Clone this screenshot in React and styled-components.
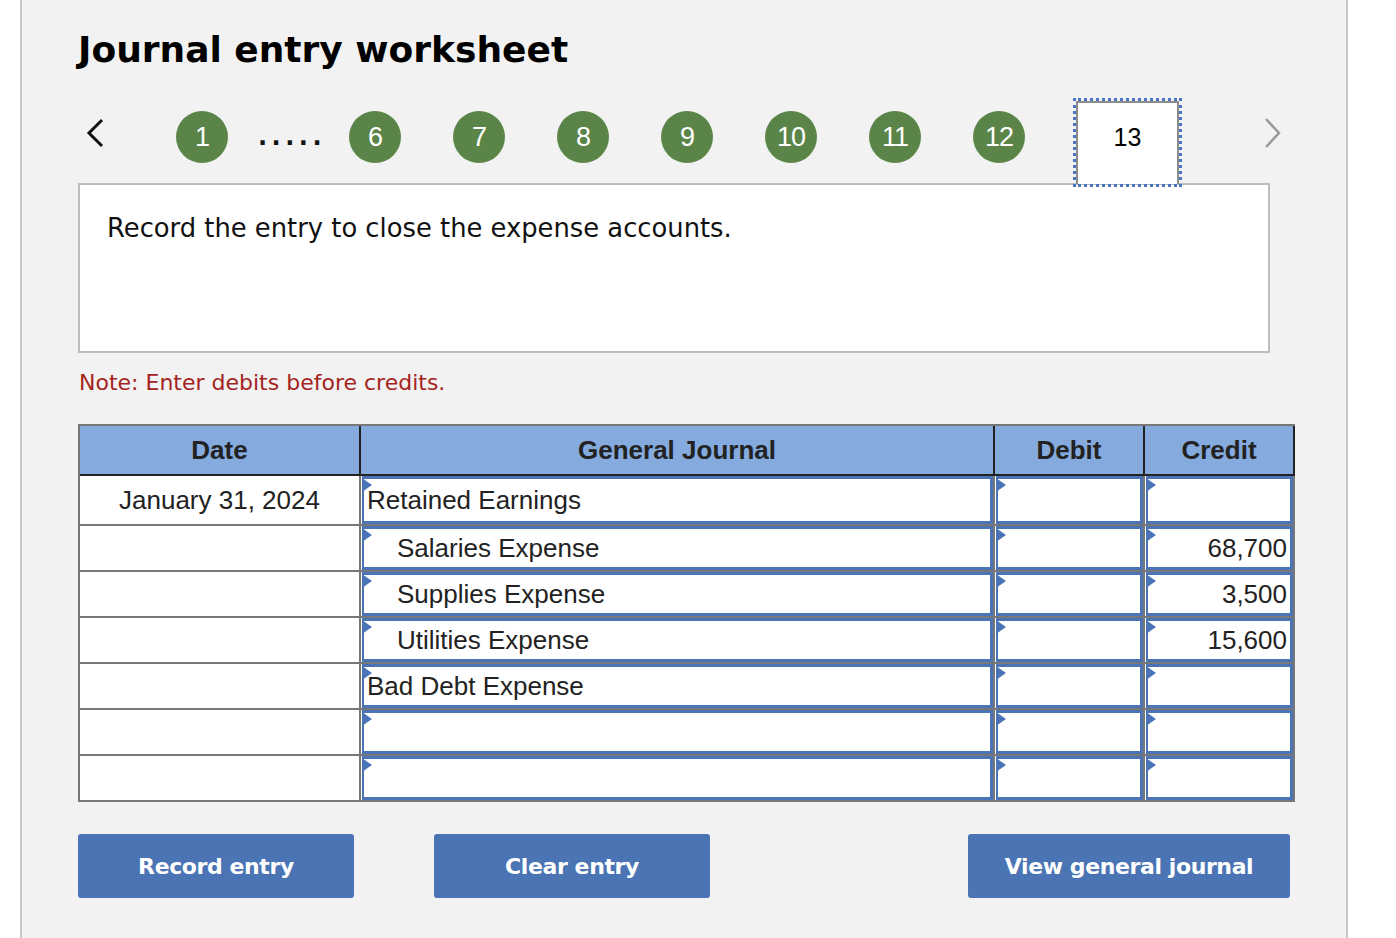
import React from "react";
import styled, { createGlobalStyle } from "styled-components";

const GlobalStyle = createGlobalStyle`
  html, body {
    margin: 0;
    padding: 0;
    background: #ffffff;
  }
  body {
    font-family: "DejaVu Sans", "Liberation Sans", sans-serif;
  }
`;

const Panel = styled.div`
  margin-left: 20px;
  width: 1328px;
  min-height: 938px;
  box-sizing: border-box;
  border-left: 2px solid #c8c8c8;
  border-right: 2px solid #c8c8c8;
  background: #f2f2f2;
  padding: 27px 0 0 56px;
`;

const Title = styled.h1`
  margin: 0;
  font-family: "DejaVu Sans", sans-serif;
  font-weight: 700;
  font-size: 36px;
  line-height: 46px;
  color: #000;
`;

const Nav = styled.div`
  display: flex;
  align-items: flex-start;
  height: 85px;
  margin-top: 25px;
`;

const Arrow = styled.svg`
  flex: none;
  margin-top: 18px;
  margin-left: ${(p) => p.$ml}px;
`;

const Step = styled.div`
  flex: none;
  width: 52px;
  height: 52px;
  margin-top: 13px;
  margin-left: ${(p) => p.$ml}px;
  border-radius: 50%;
  background: #5b8449;
  color: #fff;
  display: flex;
  align-items: center;
  justify-content: center;
  font-family: "Liberation Sans", Arial, sans-serif;
  font-size: 27px;
  letter-spacing: -1px;
`;

const Dots = styled.div`
  flex: none;
  width: 64px;
  margin-top: 13px;
  margin-left: 30px;
  height: 52px;
  line-height: 52px;
  font-family: "DejaVu Sans", sans-serif;
  font-weight: 700;
  font-size: 24px;
  letter-spacing: 4.5px;
  color: #111;
`;

const Tab = styled.div`
  flex: none;
  position: relative;
  z-index: 1;
  box-sizing: border-box;
  width: 103px;
  height: 83px;
  margin: 3px 0 0 51px;
  background: #fff;
  border: 2px solid #8c8c8c;
  border-bottom: none;
  outline: 3px dotted #4a74c4;
  outline-offset: 0;
  display: flex;
  align-items: center;
  justify-content: center;
  padding-bottom: 12px;
  font-family: "Liberation Sans", Arial, sans-serif;
  font-size: 25px;
  color: #000;
`;

const Prompt = styled.div`
  box-sizing: border-box;
  width: 1192px;
  height: 170px;
  background: #fff;
  border: 2px solid #bdbdbd;
  padding: 26px 0 0 27px;
  font-size: 25.8px;
  line-height: 34px;
  color: #111;
`;

const Note = styled.p`
  margin: 15px 0 0 1px;
  font-size: 22px;
  line-height: 30px;
  color: #a5231d;
`;

const Grid = styled.div`
  display: grid;
  grid-template-columns: 281px 634px 150px 150px;
  width: 1217px;
  margin-top: 26px;
  box-sizing: border-box;
  border-left: 2px solid #777;
  border-top: 2px solid #777;
  font-family: "Liberation Sans", Arial, sans-serif;
  color: #222;
`;

const Head = styled.div`
  height: 48px;
  box-sizing: content-box;
  background: #84aade;
  border-right: 2px solid #222;
  border-bottom: 2px solid #222;
  display: flex;
  align-items: center;
  justify-content: center;
  font-weight: 700;
  font-size: 26px;
`;

const Cell = styled.div`
  height: ${(p) => (p.$first ? 48 : 44)}px;
  box-sizing: content-box;
  background: #fff;
  border-right: 2px solid #777;
  border-bottom: 2px solid #777;
  display: flex;
  align-items: center;
  justify-content: center;
  font-size: 26px;
`;

const InputCell = styled.div`
  height: ${(p) => (p.$first ? 48 : 44)}px;
  box-sizing: content-box;
  background: #fff;
  border-right: 2px solid #777;
  border-bottom: 2px solid #777;
  padding: 0;
`;

const Field = styled.div`
  position: relative;
  box-sizing: border-box;
  height: 100%;
  margin-left: 1px;
  border: 3px solid #4a74b6;
  border-left-width: 2px;
  display: flex;
  align-items: center;
  justify-content: ${(p) => (p.$right ? "flex-end" : "flex-start")};
  padding: 0 ${(p) => (p.$right ? 3 : 0)}px 0 ${(p) => p.$indent}px;
  font-size: 26px;
  color: #222;

  &::before {
    content: "";
    position: absolute;
    left: -2px;
    top: -1px;
    border-left: 10px solid #4a74b6;
    border-top: 7px solid transparent;
    border-bottom: 7px solid transparent;
  }
`;

const Buttons = styled.div`
  display: flex;
  width: 1212px;
  margin-top: 32px;
`;

const Button = styled.button`
  flex: none;
  width: ${(p) => p.$w}px;
  height: 64px;
  margin-left: ${(p) => (p.$push ? "auto" : `${p.$ml || 0}px`)};
  border: none;
  border-radius: 3px;
  background: #4a74b4;
  color: #fff;
  font-family: "DejaVu Sans", sans-serif;
  font-weight: 700;
  font-size: 22px;
  letter-spacing: -0.4px;
  cursor: pointer;
`;

const rows = [
  { date: "January 31, 2024", account: "Retained Earnings", indent: 3, debit: "", credit: "" },
  { date: "", account: "Salaries Expense", indent: 33, debit: "", credit: "68,700" },
  { date: "", account: "Supplies Expense", indent: 33, debit: "", credit: "3,500" },
  { date: "", account: "Utilities Expense", indent: 33, debit: "", credit: "15,600" },
  { date: "", account: "Bad Debt Expense", indent: 3, debit: "", credit: "" },
  { date: "", account: "", indent: 3, debit: "", credit: "" },
  { date: "", account: "", indent: 3, debit: "", credit: "" },
];

const steps = [
  { n: 6, ml: 27 },
  { n: 7, ml: 52 },
  { n: 8, ml: 52 },
  { n: 9, ml: 52 },
  { n: 10, ml: 52 },
  { n: 11, ml: 52 },
  { n: 12, ml: 52 },
];

export default function App() {
  return (
    <>
      <GlobalStyle />
      <Panel>
        <Title>Journal entry worksheet</Title>
        <Nav>
          <Arrow $ml={6} width="22" height="34" viewBox="0 0 22 34">
            <path d="M18 4 L5 17 L18 30" fill="none" stroke="#111" strokeWidth="3" />
          </Arrow>
          <Step $ml={70}>1</Step>
          <Dots>.....</Dots>
          {steps.map((s) => (
            <Step key={s.n} $ml={s.ml}>
              {s.n}
            </Step>
          ))}
          <Tab>13</Tab>
          <Arrow $ml={83} width="22" height="34" viewBox="0 0 22 34">
            <path d="M4 3 L17 17 L4 31" fill="none" stroke="#999" strokeWidth="2.5" />
          </Arrow>
        </Nav>
        <Prompt>Record the entry to close the expense accounts.</Prompt>
        <Note>Note: Enter debits before credits.</Note>
        <Grid>
          <Head>Date</Head>
          <Head>General Journal</Head>
          <Head>Debit</Head>
          <Head>Credit</Head>
          {rows.map((r, i) => (
            <React.Fragment key={i}>
              <Cell $first={i === 0}>{r.date}</Cell>
              <InputCell $first={i === 0}>
                <Field $indent={r.indent}>{r.account}</Field>
              </InputCell>
              <InputCell $first={i === 0}>
                <Field $indent={0} $right>{r.debit}</Field>
              </InputCell>
              <InputCell $first={i === 0}>
                <Field $indent={0} $right>{r.credit}</Field>
              </InputCell>
            </React.Fragment>
          ))}
        </Grid>
        <Buttons>
          <Button $w={276}>Record entry</Button>
          <Button $w={276} $ml={80}>Clear entry</Button>
          <Button $w={322} $push>View general journal</Button>
        </Buttons>
      </Panel>
    </>
  );
}
